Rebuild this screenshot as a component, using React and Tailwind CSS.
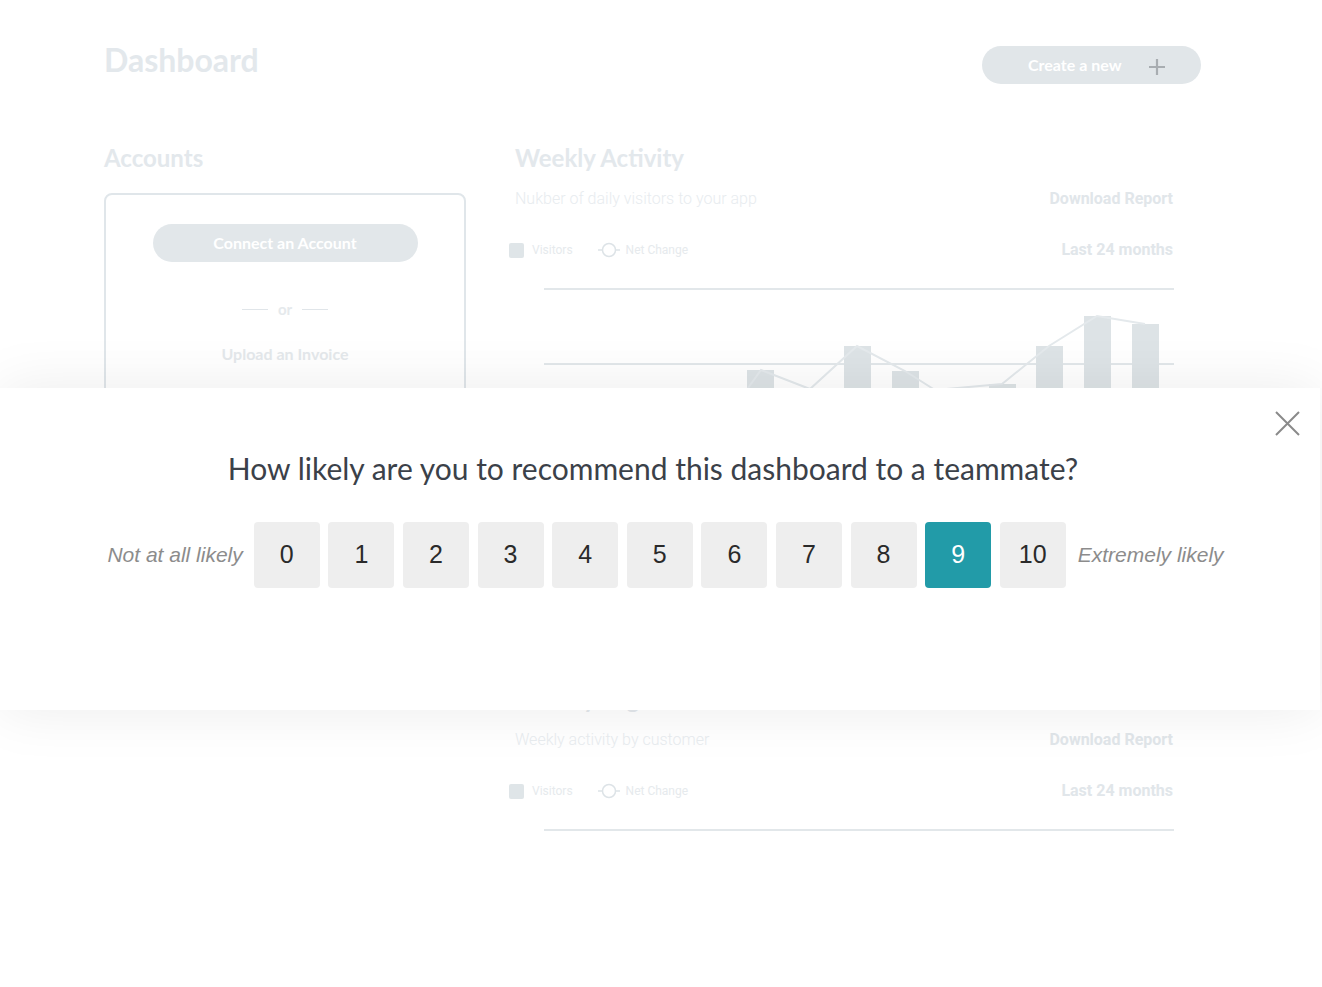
import React from "react";

const faint = "#e3e8ec";

function Legend() {
  return (
    <div className="flex items-center h-[20px] font-['Roboto',sans-serif] text-[12px] text-[#e6eaed]">
      <span className="w-[15px] h-[15px] bg-[#dfe5e8] rounded-[2px] -ml-[6px]" />
      <span className="ml-[8px]">Visitors</span>
      <svg width="24" height="16" viewBox="0 0 24 16" className="ml-[24px]" fill="none" stroke="#dde3e7" strokeWidth="1.5">
        <path d="M1 8h4M19 8h4" />
        <circle cx="12" cy="8" r="6.5" />
      </svg>
      <span className="ml-[5px]">Net Change</span>
    </div>
  );
}

function SectionHead({ title, subtitle }) {
  return (
    <>
      <h2 className="text-[24px] leading-[28px] font-bold text-[#e3e8ec] font-['Lato',sans-serif]">{title}</h2>
      <div className="mt-[17px] flex items-center justify-between h-[20px] leading-[20px] font-['Roboto',sans-serif] text-[16px]">
        <span className="text-[#e8ecef] font-light">{subtitle}</span>
        <span className="text-[#e1e6ea] font-bold">Download Report</span>
      </div>
      <div className="mt-[31px] flex items-center justify-between h-[20px]">
        <Legend />
        <span className="font-['Roboto',sans-serif] text-[16px] leading-[20px] font-bold text-[#e1e6ea]">Last 24 months</span>
      </div>
    </>
  );
}

const bars = [
  [40, 170], [88, 150], [136, 160], [184, 130], [232, 82], [329, 58], [377, 83],
  [474, 96], [521, 58], [569, 28], [617, 36],
];

function Chart() {
  return (
    <svg width="660" height="302" className="mt-[28px] block overflow-visible" fill="none">
      {[1, 76, 151, 226, 301].map((y) => (
        <line key={y} x1="29" x2="659" y1={y} y2={y} stroke="#e2e7ea" strokeWidth="2" />
      ))}
      {bars.map(([x, top]) => (
        <rect key={x} x={x} y={top} width="27" height={301 - top} fill="#dde3e6" />
      ))}
      <polyline
        points="53,190 101,170 149,200 197,150 246,82 295,101 342,58 390,83 420,102 487,96 534,58 582,28 630,36"
        stroke="#e4e9ec"
        strokeWidth="2"
      />
    </svg>
  );
}

export default function App() {
  const scores = [0, 1, 2, 3, 4, 5, 6, 7, 8, 9, 10];
  const selected = 9;

  return (
    <div className="relative min-h-[987px] bg-white overflow-hidden">
      {/* dashboard (behind the survey) */}
      <div className="pl-[104px] pt-[40px] w-[1201px]">
        <div className="flex items-start justify-between">
          <h1 className="text-[32px] leading-[40px] font-bold font-['Lato',sans-serif]" style={{ color: faint }}>
            Dashboard
          </h1>
          <button className="mt-[6px] h-[38px] w-[219px] rounded-full bg-[#e1e6e9] flex items-center pl-[46px] font-['Lato',sans-serif] text-[16px] font-bold text-white">
            Create a new
            <svg width="18" height="18" viewBox="0 0 18 18" className="ml-[27px] mt-[3px]" stroke="#a8adb1" strokeWidth="2.2">
              <path d="M9 1v16M1 9h16" />
            </svg>
          </button>
        </div>

        <div className="mt-[60px] grid grid-cols-[362px_658px] gap-x-[49px]">
          <div>
            <h2 className="text-[24px] leading-[28px] font-bold text-[#e3e8ec] font-['Lato',sans-serif]">Accounts</h2>
            <div className="mt-[21px] h-[320px] rounded-lg border-2 border-[#e0e6ea] pt-[29px] flex flex-col items-center font-['Lato',sans-serif]">
              <button className="h-[38px] w-[265px] rounded-full bg-[#e2e7ea] text-white text-[16px] font-bold">
                Connect an Account
              </button>
              <div className="mt-[37px] flex items-center gap-[10px] h-[20px] text-[15px] font-bold text-[#e5e9ec]">
                <span className="w-[26px] h-px bg-[#e0e5e9]" />
                or
                <span className="w-[26px] h-px bg-[#e0e5e9]" />
              </div>
              <div className="mt-[25px] h-[20px] leading-[20px] text-[16px] font-bold text-[#e4e8eb]">Upload an Invoice</div>
            </div>
          </div>

          <div>
            <SectionHead title="Weekly Activity" subtitle="Nukber of daily visitors to your app" />
            <Chart />
            <div className="mt-[95px]">
              <SectionHead title="Weekly Logins" subtitle="Weekly activity by customer" />
              <svg width="660" height="4" className="mt-[28px] block">
                <line x1="29" x2="659" y1="1" y2="1" stroke="#e2e7ea" strokeWidth="2" />
              </svg>
            </div>
          </div>
        </div>
      </div>

      {/* survey panel */}
      <div className="absolute left-0 top-[388px] w-[1320px] h-[322px] bg-white shadow-[0_0_55px_rgba(0,0,0,0.08)]">
        <button className="absolute left-[1275px] top-[23px] w-[25px] h-[25px]">
          <svg width="25" height="25" viewBox="0 0 25 25" stroke="#8a8a8a" strokeWidth="2">
            <path d="M1 1l23 23M24 1L1 24" />
          </svg>
        </button>
        <p className="pt-[61px] pr-[14px] text-center text-[30px] leading-[38px] text-[#3b4149] font-['Lato',sans-serif]">
          How likely are you to recommend this dashboard to a teammate?
        </p>
        <div className="mt-[35px] flex items-center justify-center pl-[11px] font-['Liberation_Sans',Arial,sans-serif]">
          <span className="text-[21px] italic text-[#8c8c8c]">Not at all likely</span>
          <div className="ml-[11px] mr-[12px] flex gap-[8.6px]">
            {scores.map((n) => (
              <button
                key={n}
                className={
                  n === selected
                    ? "w-[66px] h-[66px] rounded-[4px] bg-[#229ba8] text-white text-[25px]"
                    : "w-[66px] h-[66px] rounded-[4px] bg-[#eeeeee] text-[#2a2a2a] text-[25px]"
                }
              >
                {n}
              </button>
            ))}
          </div>
          <span className="text-[21px] italic text-[#8c8c8c]">Extremely likely</span>
        </div>
      </div>
    </div>
  );
}
